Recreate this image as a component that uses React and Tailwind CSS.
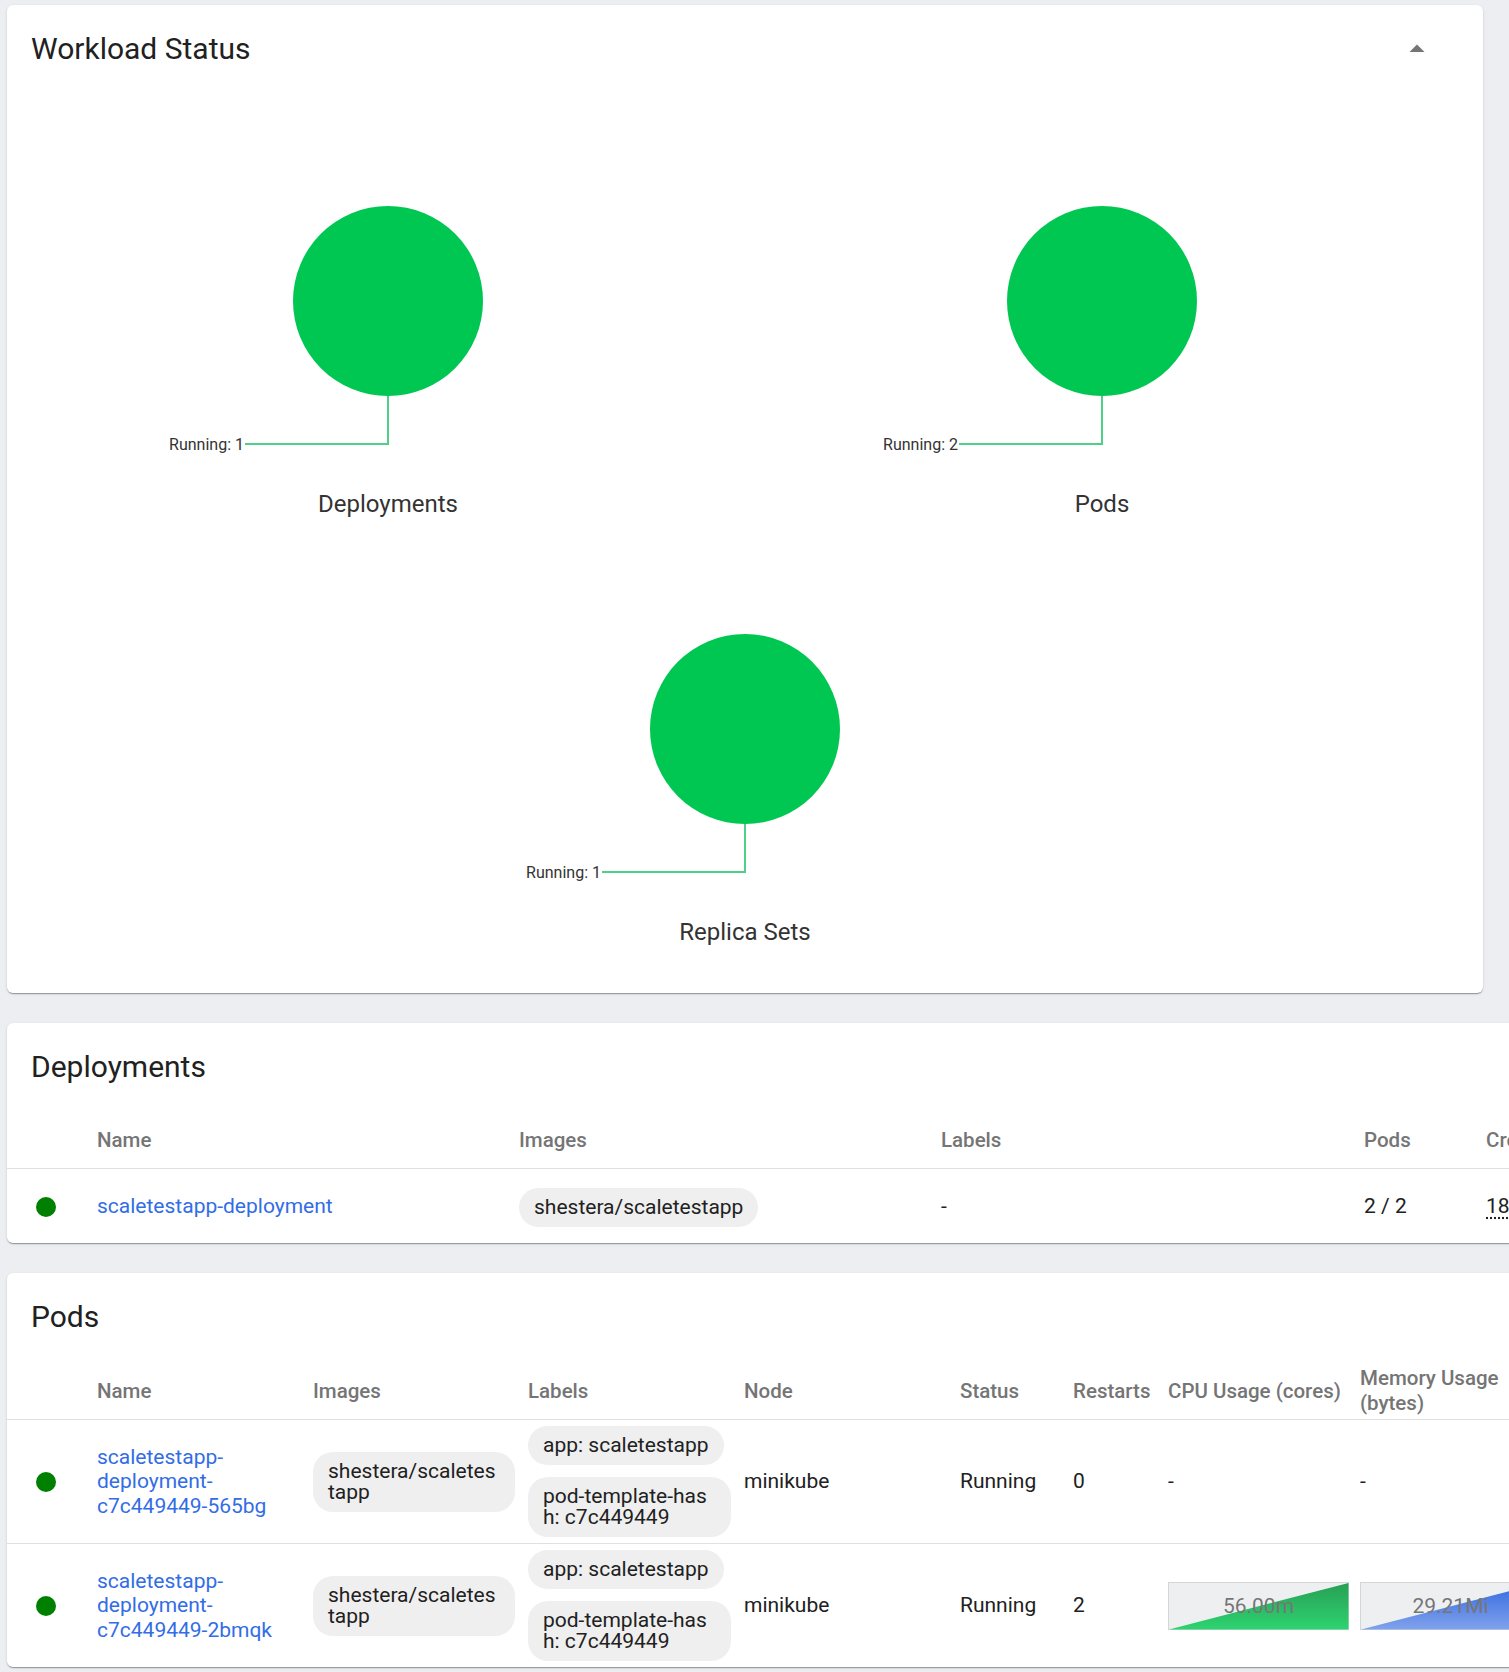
import React from "react";

const cardShadow =
  "rounded-[6px] bg-white shadow-[0_2px_1px_-1px_rgba(0,0,0,0.2),0_1px_1px_0_rgba(0,0,0,0.14),0_1px_3px_0_rgba(0,0,0,0.12)]";

const charts = [
  { title: "Deployments", running: 1 },
  { title: "Pods", running: 2 },
  { title: "Replica Sets", running: 1 },
];

const pods = [
  {
    name: "scaletestapp-deployment-c7c449449-565bg",
    restarts: "0",
    cpu: null,
    mem: null,
  },
  {
    name: "scaletestapp-deployment-c7c449449-2bmqk",
    restarts: "2",
    cpu: "56.00m",
    mem: "29.21Mi",
  },
];

const Chip = ({ children, className = "" }) => (
  <span
    className={
      "inline-block max-w-full break-all rounded-[20px] bg-[#efefef] px-[15px] py-[9px] text-[21px] leading-[21px] text-[#212121] " +
      className
    }
  >
    {children}
  </span>
);

const StatusDot = () => (
  <div className="ml-[29px] h-[20px] w-[20px] rounded-full bg-[#008000]" />
);

const PieChart = ({ title, running }) => (
  <div className="flex h-[428px] w-[714px] flex-col items-center">
    <svg width="714" height="400" viewBox="0 0 714 400">
      <circle cx="357" cy="211" r="95" fill="#00c752" />
      <polyline
        points="357,306 357,354 214,354"
        fill="none"
        stroke="#4fd087"
        strokeWidth="2"
      />
      <text
        x="213"
        y="354"
        textAnchor="end"
        dominantBaseline="central"
        fontSize="16"
        fill="#333333"
        fontFamily="Roboto, sans-serif"
      >
        Running: {running}
      </text>
    </svg>
    <div className="text-[24px] leading-[28px] text-[#333333]">{title}</div>
  </div>
);

const Sparkline = ({ value, id, top, bottom }) => (
  <svg width="181" height="48" viewBox="0 0 181 48" className="block">
    <defs>
      <linearGradient id={id} x1="0" y1="0" x2="0" y2="1">
        <stop offset="0%" stopColor={top} />
        <stop offset="100%" stopColor={bottom} />
      </linearGradient>
    </defs>
    <rect x="0.5" y="0.5" width="180" height="47" fill="#eeeff1" stroke="#d3d6d9" />
    <polygon points="1,47.5 180.5,1 180.5,47.5" fill={`url(#${id})`} />
    <text
      x="90.5"
      y="24"
      textAnchor="middle"
      dominantBaseline="central"
      fontSize="21"
      fill="#767676"
      fontFamily="Roboto, sans-serif"
    >
      {value}
    </text>
  </svg>
);

const headCell = "text-[20.5px] font-medium text-[#757575]";

export default function App() {
  return (
    <div className="min-h-[1672px] w-[1509px] overflow-hidden bg-[#eceef1] pl-[7px] pt-[5px] pb-[5px] font-[Roboto,'Liberation_Sans',sans-serif] text-[#212121]">
      {/* Workload status */}
      <div className={cardShadow + " w-[1476px]"}>
        <div className="flex items-start justify-between pb-[23px] pl-[24px] pr-[48px] pt-[26px]">
          <h2 className="text-[30px] leading-[36px] text-[#212121]">Workload Status</h2>
          <svg width="36" height="36" viewBox="0 0 24 24">
            <path d="M7 14l5-5 5 5z" fill="#757575" />
          </svg>
        </div>
        <div className="flex flex-wrap justify-center px-[24px] pb-[47px]">
          {charts.map((c) => (
            <PieChart key={c.title} title={c.title} running={c.running} />
          ))}
        </div>
      </div>

      {/* Deployments */}
      <div className={cardShadow + " mt-[30px] w-[1700px]"}>
        <h2 className="pl-[24px] pt-[26px] text-[30px] leading-[36px] text-[#212121]">
          Deployments
        </h2>
        <div className="mt-[28px]">
          <div className="grid h-[56px] grid-cols-[90px_422px_422px_423px_122px_1fr] items-center border-b border-[#e0e0e0]">
            <div />
            <div className={headCell}>Name</div>
            <div className={headCell}>Images</div>
            <div className={headCell}>Labels</div>
            <div className={headCell}>Pods</div>
            <div className={headCell}>Created</div>
          </div>
          <div className="grid h-[74px] grid-cols-[90px_422px_422px_423px_122px_1fr] items-center pt-[2px] text-[21px]">
            <StatusDot />
            <a className="text-[#326de6]">scaletestapp-deployment</a>
            <div>
              <Chip>shestera/scaletestapp</Chip>
            </div>
            <div>-</div>
            <div>2 / 2</div>
            <div>
              <span className="underline decoration-dotted decoration-[#212121] underline-offset-[4px]">
                18 minutes ago
              </span>
            </div>
          </div>
        </div>
      </div>

      {/* Pods */}
      <div className={cardShadow + " mt-[30px] w-[1700px]"}>
        <h2 className="pl-[24px] pt-[26px] text-[30px] leading-[36px] text-[#212121]">Pods</h2>
        <div className="mt-[28px]">
          <div className="grid h-[56px] grid-cols-[90px_216px_215px_216px_216px_113px_95px_192px_192px] items-center">
            <div />
            <div className={headCell}>Name</div>
            <div className={headCell}>Images</div>
            <div className={headCell}>Labels</div>
            <div className={headCell}>Node</div>
            <div className={headCell}>Status</div>
            <div className={headCell}>Restarts</div>
            <div className={headCell}>CPU Usage (cores)</div>
            <div className={headCell + " pr-[12px] leading-[25px]"}>Memory Usage (bytes)</div>
          </div>
          {pods.map((p) => (
            <div
              key={p.name}
              className="grid grid-cols-[90px_216px_215px_216px_216px_113px_95px_192px_192px] items-center border-t border-[#e0e0e0] py-[6px] text-[21px]"
            >
              <StatusDot />
              <a className="pr-[16px] leading-[24.6px] text-[#326de6]">{p.name}</a>
              <div className="pr-[13px]">
                <Chip className="w-full">shestera/scaletestapp</Chip>
              </div>
              <div className="flex flex-col items-start gap-[12px] pr-[13px]">
                <Chip>app: scaletestapp</Chip>
                <Chip>pod-template-hash: c7c449449</Chip>
              </div>
              <div>minikube</div>
              <div>Running</div>
              <div>{p.restarts}</div>
              <div>
                {p.cpu ? (
                  <Sparkline value={p.cpu} id="cpuGrad" top="#27a055" bottom="#2ed371" />
                ) : (
                  "-"
                )}
              </div>
              <div>
                {p.mem ? (
                  <Sparkline value={p.mem} id="memGrad" top="#3369e0" bottom="#80a2ec" />
                ) : (
                  "-"
                )}
              </div>
            </div>
          ))}
        </div>
      </div>
    </div>
  );
}
